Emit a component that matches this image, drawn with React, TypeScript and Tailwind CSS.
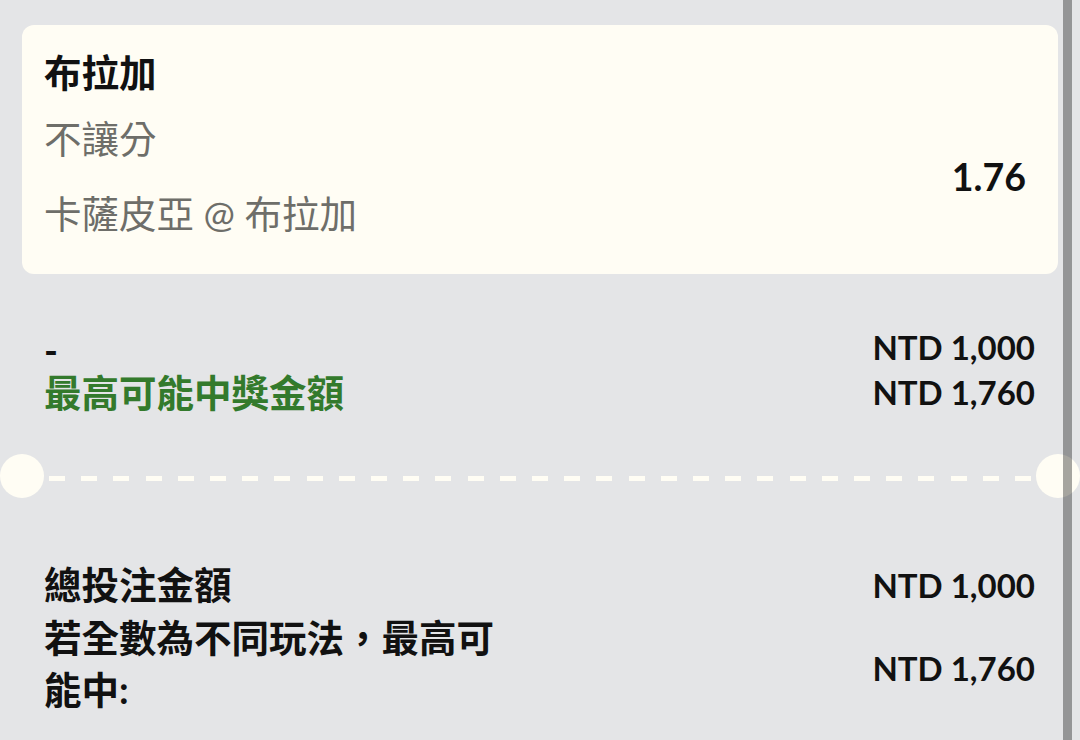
import React from "react";

export default function App() {
  return (
    <div className="relative w-[1080px] h-[740px] overflow-hidden bg-[#e4e5e7] font-['Lato','Noto_Sans_CJK_TC',sans-serif] text-[#111111]">
      <div className="px-[22px] pt-[25px]">
        <div className="rounded-[12px] bg-[#fffdf4] pl-[22px] pr-[32px] pt-[23px] pb-[35px]">
          <div className="text-[37.5px] leading-[50px] font-bold">布拉加</div>
          <div className="mt-[16px] flex items-center justify-between">
            <div className="text-[37.5px] text-[#6e6e69]">
              <div className="leading-[50px]">不讓分</div>
              <div className="mt-[25px] leading-[50px]">卡薩皮亞 @ 布拉加</div>
            </div>
            <div className="text-[37.5px] font-bold leading-[50px]">1.76</div>
          </div>
        </div>
      </div>

      <div className="mt-[51px] pl-[44px] pr-[45px]">
        <div className="flex h-[45px] items-center justify-between">
          <div className="mt-[6px] text-[37.5px] font-bold leading-[45px]">-</div>
          <div className="text-[33px] font-bold leading-[45px]">NTD 1,000</div>
        </div>
        <div className="flex h-[45px] items-center justify-between">
          <div className="text-[37.5px] font-bold leading-[45px] text-[#337a2c]">最高可能中獎金額</div>
          <div className="text-[33px] font-bold leading-[45px]">NTD 1,760</div>
        </div>
      </div>

      <div className="relative mt-[39px] h-[44px]">
        <div className="absolute left-0 top-0 h-[44px] w-[44px] rounded-full bg-[#fffdf4]" />
        <div className="absolute left-[1036px] top-0 h-[44px] w-[44px] rounded-full bg-[#fffdf4]" />
        <div className="absolute left-[49px] top-[22px] h-[5px] w-[982px] bg-[repeating-linear-gradient(to_right,#fffdf4_0px,#fffdf4_16px,transparent_16px,transparent_32.2px)]" />
      </div>

      <div className="mt-[61px] pl-[44px] pr-[45px]">
        <div className="flex items-center justify-between">
          <div className="text-[37.5px] font-bold leading-[52.5px]">總投注金額</div>
          <div className="text-[33px] font-bold leading-[52.5px]">NTD 1,000</div>
        </div>
        <div className="flex items-center justify-between">
          <div className="w-[470px] text-[37.5px] font-bold leading-[52.5px]">若全數為不同玩法，最高可能中:</div>
          <div className="mt-[8px] text-[33px] font-bold leading-[52.5px]">NTD 1,760</div>
        </div>
      </div>

      <div className="absolute right-[8px] top-0 h-[740px] w-[9px] bg-black/35" />
    </div>
  );
}
